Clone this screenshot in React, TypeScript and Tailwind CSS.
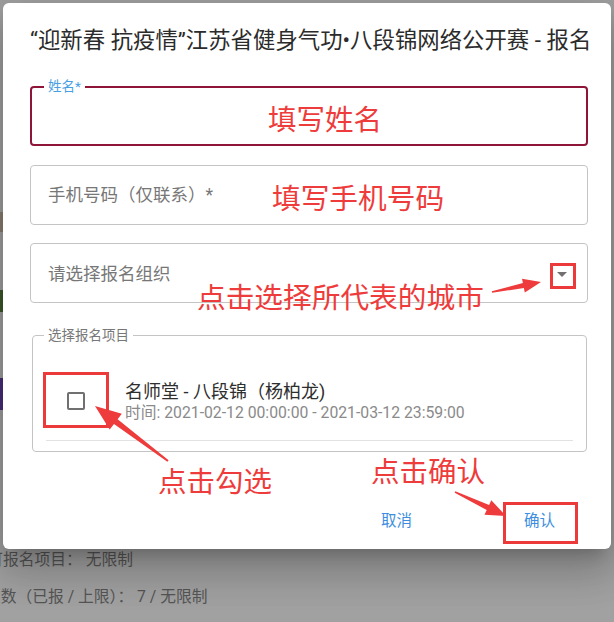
import React from "react";

type P = [number, number];
function arrowPts(t: P, p: P, headLen: number, headHalf: number, sTail: number, sHead: number) {
  const dx = p[0] - t[0];
  const dy = p[1] - t[1];
  const len = Math.hypot(dx, dy);
  const ux = dx / len;
  const uy = dy / len;
  const nx = -uy;
  const ny = ux;
  const bx = p[0] - ux * headLen;
  const by = p[1] - uy * headLen;
  const pts: P[] = [
    [t[0] + nx * sTail, t[1] + ny * sTail],
    [bx + nx * sHead, by + ny * sHead],
    [bx + nx * headHalf, by + ny * headHalf],
    [p[0], p[1]],
    [bx - nx * headHalf, by - ny * headHalf],
    [bx - nx * sHead, by - ny * sHead],
    [t[0] - nx * sTail, t[1] - ny * sTail],
  ];
  return pts.map((q) => `${q[0].toFixed(1)},${q[1].toFixed(1)}`).join(" ");
}

const CJK = { fontFamily: 'Roboto, "Noto Sans CJK SC", sans-serif' };
const ANNO = { fontFamily: '"Noto Sans CJK SC", sans-serif' };

export default function App() {
  return (
    <div className="relative w-[614px] h-[622px] overflow-hidden bg-[#a1a1a1] flex flex-col" style={CJK}>
      <div className="h-[550px] w-[4px] flex flex-col">
        <div className="h-[212px]" />
        <div className="h-[20px] bg-[#8a8070]" />
        <div className="h-[58px]" />
        <div className="h-[22px] bg-[#3d5a2c]" />
        <div className="h-[66px]" />
        <div className="h-[32px] bg-[#47307a]" />
      </div>
      <div className="pt-[1px] text-[15.75px] text-[#555] flex flex-col gap-[19px]">
        <div className="ml-[-12.75px] leading-[18px] whitespace-nowrap">可报名项目： 无限制</div>
        <div className="ml-[-15px] leading-[18px] whitespace-nowrap">人数（已报 / 上限）： 7 / 无限制</div>
      </div>

      {/* modal dialog */}
      <div className="absolute left-[3px] top-[3px] w-[608px] h-[546px] rounded-[6px] bg-white shadow-[0_11px_15px_-7px_rgba(0,0,0,0.2),0_24px_38px_3px_rgba(0,0,0,0.14),0_9px_46px_8px_rgba(0,0,0,0.12)] pl-[27px] pr-[23px] flex flex-col">
        <div className="pt-[21px] leading-[32px] text-[22.4px] text-[#2b2b2b] whitespace-nowrap">
          “迎新春 抗疫情”江苏省健身气功•八段锦网络公开赛 - 报名
        </div>

        <div className="relative mt-[30px] h-[60px] rounded-[4px] border-2 border-[#8e1538]">
          <span className="absolute left-[12px] top-[-10px] px-[4px] bg-white text-[13.5px] leading-[16px] text-[#4a9fe2]">
            姓名*
          </span>
        </div>

        <div className="mt-[19px] h-[60px] rounded-[4px] border border-[#c4c4c4] flex items-center px-[17px] text-[17.5px] text-[#777]">
          手机号码（仅联系）*
        </div>

        <div className="mt-[18px] h-[60px] rounded-[4px] border border-[#c4c4c4] flex items-center pl-[17px] pr-[20px] text-[17.5px] text-[#777]">
          <span className="flex-1 pt-[2px]">请选择报名组织</span>
          <span className="w-0 h-0 border-l-[5px] border-r-[5px] border-t-[5px] border-l-transparent border-r-transparent border-t-[#707070] mt-[2px]" />
        </div>

        <div className="relative mt-[32px] ml-[2px] mr-[1px] h-[117px] rounded-[4px] border border-[#c4c4c4] px-[13px]">
          <span className="absolute left-[11px] top-[-9px] px-[4px] bg-white text-[13.5px] leading-[16px] text-[#777]">
            选择报名项目
          </span>
          <div className="pt-[45px] flex items-center">
            <div className="ml-[21px] mt-[-3px] w-[18px] h-[18px] rounded-[2px] border-2 border-[#707070]" />
            <div className="ml-[40px]">
              <div className="text-[18px] leading-[22px] text-[#2e2e2e]">名师堂 - 八段锦（杨柏龙)</div>
              <div className="text-[15.75px] leading-[20px] text-[#8a8a8a]">时间: 2021-02-12 00:00:00 - 2021-03-12 23:59:00</div>
            </div>
          </div>
          <div className="mt-[17px] h-px bg-[#e2e2e2]" />
        </div>

        <div className="mt-[52px] mr-[17px] flex justify-end gap-[80px]">
          <div className="h-[36px] px-[16px] flex items-center text-[15.5px] text-[#3d8ee0]">取消</div>
          <div className="h-[36px] px-[16px] flex items-center text-[15.5px] text-[#3d8ee0]">确认</div>
        </div>
      </div>

      {/* tutorial annotations drawn over the screenshot */}
      <div className="absolute left-[268px] top-[104px] text-[28.5px] leading-[28px] text-[#ee3b3b] whitespace-nowrap" style={ANNO}>填写姓名</div>
      <div className="absolute left-[272px] top-[183px] text-[28.7px] leading-[28px] text-[#ee3b3b] whitespace-nowrap" style={ANNO}>填写手机号码</div>
      <div className="absolute left-[197px] top-[282px] text-[28.7px] leading-[28px] text-[#ee3b3b] whitespace-nowrap" style={ANNO}>点击选择所代表的城市</div>
      <div className="absolute left-[158px] top-[466px] text-[28.5px] leading-[28px] text-[#ee3b3b] whitespace-nowrap" style={ANNO}>点击勾选</div>
      <div className="absolute left-[371px] top-[456px] text-[28.5px] leading-[28px] text-[#ee3b3b] whitespace-nowrap" style={ANNO}>点击确认</div>

      <div className="absolute left-[550px] top-[263px] w-[26px] h-[26px] border-[3px] border-[#ec3a3a]" />
      <div className="absolute left-[43px] top-[372px] w-[66px] h-[56px] border-[3px] border-[#ec3a3a]" />
      <div className="absolute left-[503px] top-[502px] w-[75px] h-[42px] border-[3px] border-[#ec3a3a]" />

      <svg className="absolute left-0 top-0" width="614" height="622" viewBox="0 0 614 622">
        <polygon points={arrowPts([492, 292], [541, 282], 18, 7, 0.8, 2.5)} fill="#ee3b3b" />
        <polygon points={arrowPts([168, 461], [95, 406], 26, 10, 1, 3)} fill="#ee3b3b" />
        <polygon points={arrowPts([455, 492], [506, 516], 20, 8, 0.8, 2.8)} fill="#ee3b3b" />
      </svg>
    </div>
  );
}
